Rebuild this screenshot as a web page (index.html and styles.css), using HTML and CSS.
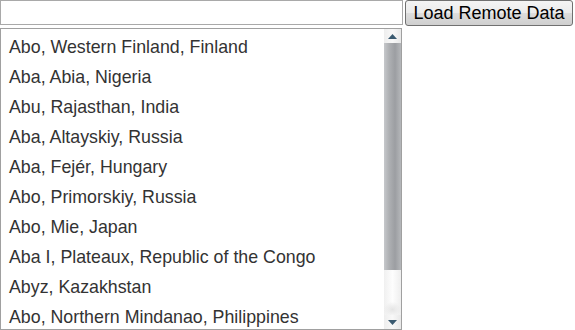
FILE: index.html
```html
<!DOCTYPE html>
<html>
<head>
  <meta charset="utf-8" />
  <title>Remote Data</title>
  <link rel="stylesheet" href="styles.css">
</head>
<body>
  <div class="toolbar">
    <input type="text" class="search" />
    <button type="button" class="load-btn">Load Remote Data</button>
  </div>

  <!-- Result list with a drawn scrollbar -->
  <div class="results">
    <div class="rows">
      <div class="row">Abo, Western Finland, Finland</div>
      <div class="row">Aba, Abia, Nigeria</div>
      <div class="row">Abu, Rajasthan, India</div>
      <div class="row">Aba, Altayskiy, Russia</div>
      <div class="row">Aba, Fejér, Hungary</div>
      <div class="row">Abo, Primorskiy, Russia</div>
      <div class="row">Abo, Mie, Japan</div>
      <div class="row">Aba I, Plateaux, Republic of the Congo</div>
      <div class="row">Abyz, Kazakhstan</div>
      <div class="row">Abo, Northern Mindanao, Philippines</div>
    </div>
    <div class="scrollbar">
      <div class="sb-btn">
        <svg width="9" height="5" viewBox="0 0 9 5"><path d="M4.5 0 L9 5 L0 5 Z" fill="#3a5a70"/></svg>
      </div>
      <div class="sb-thumb"></div>
      <div class="sb-track"></div>
      <div class="sb-btn">
        <svg width="9" height="5" viewBox="0 0 9 5"><path d="M0 0 L9 0 L4.5 5 Z" fill="#3a5a70"/></svg>
      </div>
    </div>
  </div>
</body>
</html>
```

FILE: styles.css
```css
body {
  margin: 0;
  font-family: "Liberation Sans", Arial, sans-serif;
  background: #fff;
}

.toolbar {
  display: flex;
  gap: 2px;
  align-items: flex-start;
}

.search {
  width: 403px;
  height: 25px;
  box-sizing: border-box;
  margin: 0;
  border: 1px solid #a9a9a9;
  padding: 2px 4px;
  font-size: 16px;
  font-family: inherit;
}

.load-btn {
  width: 168px;
  height: 26px;
  box-sizing: border-box;
  margin: 0;
  padding: 0 4px;
  font-size: 18px;
  line-height: 22px;
  font-family: inherit;
  color: #000;
  border: 1px solid #707070;
  border-radius: 3px;
  background: linear-gradient(#f4f4f4 0%, #ebebeb 50%, #dddddd 51%, #cfcfcf 100%);
}

/* Listbox */
.results {
  display: flex;
  width: 402px;
  height: 302px;
  box-sizing: border-box;
  margin-top: 2px;
  border: 1px solid #a0a0a0;
  overflow: hidden;
}

.rows {
  flex: 1;
  padding-top: 3px;
  overflow: hidden;
}

.row {
  line-height: 30px;
  padding-left: 8px;
  font-size: 17.8px;
  color: #333;
  white-space: nowrap;
}

.scrollbar {
  width: 17px;
  display: flex;
  flex-direction: column;
  background: linear-gradient(90deg, #f1f1f1, #fbfbfb 50%, #ececec);
}

.sb-btn {
  height: 14px;
  display: flex;
  align-items: center;
  justify-content: center;
  background: linear-gradient(90deg, #eeeeee, #f8f8f8 50%, #e8e8e8);
}

.sb-thumb {
  height: 227px;
  background: linear-gradient(90deg, #c6c8cb 0%, #aeb0b3 30%, #9c9ea2 65%, #b5b7ba 100%);
}

.sb-track {
  flex: 1;
  background:
    radial-gradient(ellipse 9px 8px at 50% 88%, #e4e4e4, rgba(255,255,255,0)),
    linear-gradient(90deg, #f0f0f0, #fdfdfd 50%, #eeeeee);
}
```
